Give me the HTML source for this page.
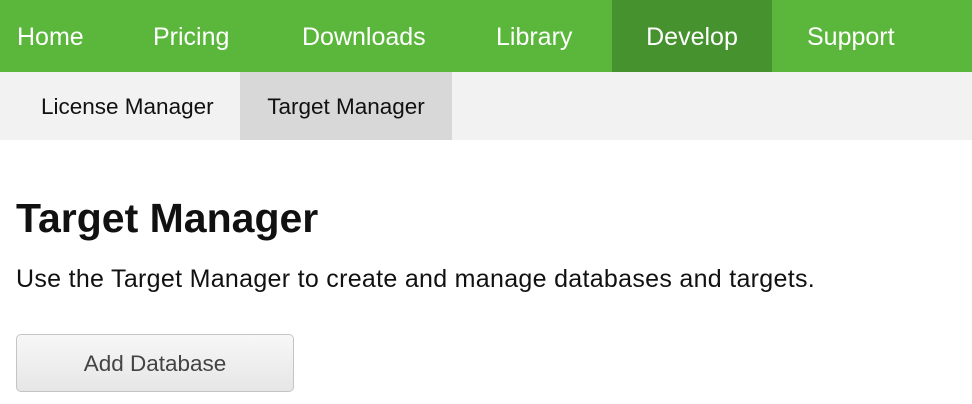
<!DOCTYPE html>
<html><head><style>
body{margin:0;width:972px;height:404px;overflow:hidden;background:#fff;font-family:"Liberation Sans",sans-serif;position:relative}
.nav{position:absolute;top:0;left:0;width:972px;height:72px;background:#5bb73c}
.nav span{position:absolute;top:0;height:72px;line-height:74px;color:#fff;font-size:25px}
.act{background:#45922f}
.sub{position:absolute;top:72px;left:0;width:972px;height:68px;background:#f2f2f2}
.sub span{position:absolute;top:0;height:68px;line-height:70px;font-size:22.5px;color:#111}
h1{position:absolute;left:16px;top:192px;margin:0;font-size:41px;font-weight:bold;color:#111;line-height:52px}
p{position:absolute;left:16px;top:264px;margin:0;font-size:25px;letter-spacing:0.3px;color:#111;line-height:30px}
.btn{position:absolute;left:16px;top:334px;width:276px;height:56px;border:1px solid #c4c4c4;border-radius:5px;background:linear-gradient(#f7f7f7,#e6e6e6);text-align:center;line-height:58px;font-size:22.5px;color:#444;box-sizing:content-box}
</style></head><body>
<div class="nav">
<span style="left:17px">Home</span>
<span style="left:153px">Pricing</span>
<span style="left:302px">Downloads</span>
<span style="left:496px">Library</span>
<span class="act" style="left:612px;width:160px;text-align:center">Develop</span>
<span style="left:807px">Support</span>
</div>
<div class="sub">
<span style="left:41px">License Manager</span>
<span style="left:240px;width:212px;background:#d8d8d8;text-align:center">Target Manager</span>
</div>
<h1>Target Manager</h1>
<p>Use the Target Manager to create and manage databases and targets.</p>
<div class="btn">Add Database</div>
</body></html>
